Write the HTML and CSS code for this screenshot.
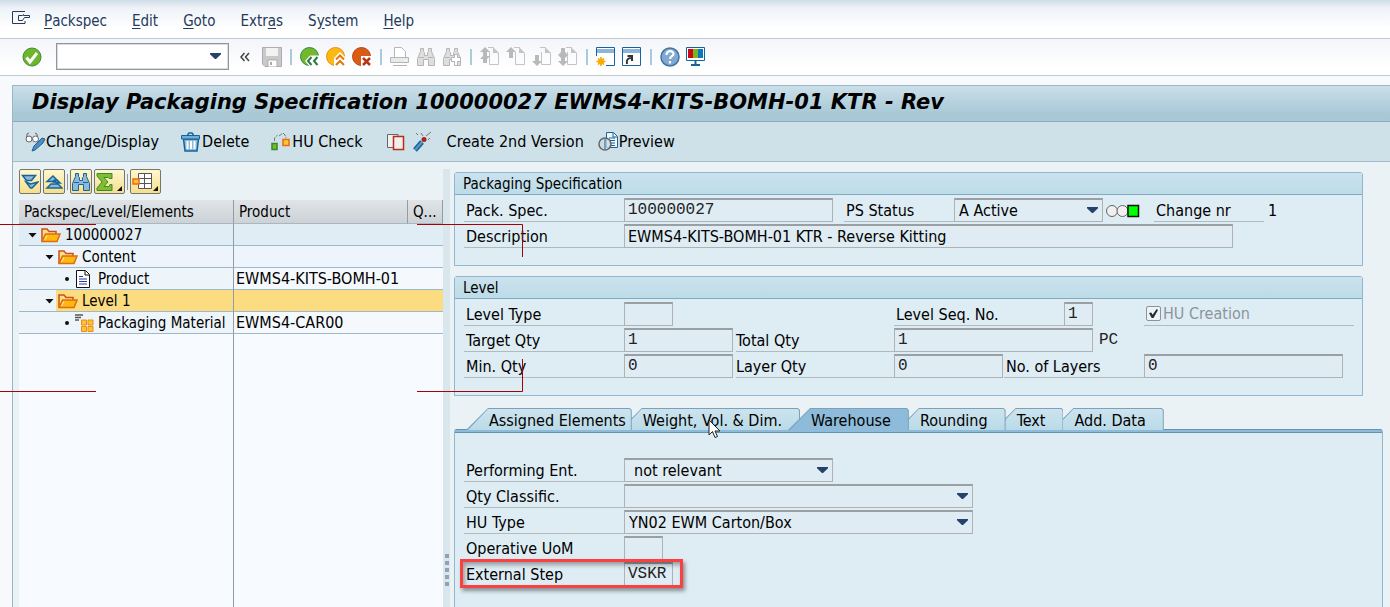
FILE: index.html
```html
<!DOCTYPE html>
<html lang="en">
<head>
<meta charset="utf-8">
<title>Display Packaging Specification</title>
<link rel="stylesheet" href="styles.css">
</head>
<body>
<svg class="defs" aria-hidden="true">
  <symbol id="page" viewBox="0 0 19 19"><path d="M8 .5h5.500M9.500 5v12.500h9V6M9.500 .5h4" fill="none" stroke="#c4c4c4"/><path d="M13 0v6h6z" fill="#c4c4c4"/></symbol>
  <symbol id="binoc" viewBox="0 0 20 20"><path d="M4.500 1.500h3v3l1 1v3h3v-3l1-1v-3h3v3l3 7v7h-6v-6h-5v6h-6v-7l3-7z"/><path d="M3 10.500h5M12 10.500h5" /></symbol>
  <symbol id="folder" viewBox="0 0 20 16"><path d="M1 14.500V2h5l2 2.500h7V7" fill="#ffe08a" stroke="#c9501c" stroke-width="1.500"/><path d="M1 14.500L4.500 7H19l-3 7.500z" fill="#fdb913" stroke="#e06b10" stroke-width="1.500"/><path d="M3.500 13L6 8.500" stroke="#fff0a0"/></symbol>
</svg>

<nav class="menubar">
  <button class="sysmenu" aria-label="Window menu"><svg width="19" height="14" viewBox="0 0 19 14" fill="none" stroke="#24395c"><path d="M13 .5H.5v12h12.500V10M6.500 9.500v-5h4l1-1v1h6v2h-5l-2 3z"/></svg></button>
  <button><u>P</u>ackspec</button><button><u>E</u>dit</button><button><u>G</u>oto</button><button>Extr<u>a</u>s</button><button>S<u>y</u>stem</button><button><u>H</u>elp</button>
</nav>

<div class="toolbar">
  <button class="enter" aria-label="Enter"><svg width="20" height="20" viewBox="0 0 20 20"><circle cx="10" cy="10" r="9" fill="#6db52b" stroke="#3d8b37"/><path d="M4.500 10.500l3.500 4.500L15 6" fill="none" stroke="#fff" stroke-width="3"/></svg></button>
  <span class="combo command"><input aria-label="Command"></span>
  <button class="collapse" aria-label="Hide command field"><svg width="10" height="10" viewBox="0 0 10 10" fill="none" stroke="#444" stroke-width="1.500"><path d="M4.500 1L1 5l3.500 4M9 1L5.500 5 9 9"/></svg></button>
  <button aria-label="Save"><svg width="20" height="20" viewBox="0 0 20 20"><path d="M.5 .5h19v19H3l-2.500-2.500z" fill="#c9c9c9" stroke="#adadad"/><path d="M4 1h12v8H4z" fill="#f3f3f3"/><path d="M6 13h9v7H6z" fill="#fff" stroke="#adadad"/><path d="M8 15h2v3H8z" fill="#aaa"/></svg></button>
  <i class="sep"></i>
  <button aria-label="Back"><svg width="20" height="20" viewBox="0 0 20 20"><circle cx="9.500" cy="9.500" r="9" fill="#73b72b" stroke="#2c8a4b"/><path d="M5 14l5-5.500h10V20H10z" fill="#fff"/><path d="M11.500 10L8 14l3.500 4M17.500 10L14 14l3.500 4" fill="none" stroke="#287b43" stroke-width="2"/></svg></button>
  <button aria-label="Exit"><svg width="20" height="20" viewBox="0 0 20 20"><circle cx="9.500" cy="9.500" r="9" fill="#fdb913" stroke="#ee8b18"/><path d="M14 5l6 6v9H8v-9z" fill="#fff"/><path d="M10 12.500L14 8.500l4 4M10 18l4-4 4 4" fill="none" stroke="#e4760d" stroke-width="2"/></svg></button>
  <button aria-label="Cancel"><svg width="20" height="20" viewBox="0 0 20 20"><circle cx="9.500" cy="9.500" r="9" fill="#d95b16" stroke="#bb4212"/><path d="M9 9h11v11H9z" fill="#fff"/><path d="M11 11l7 7M18 11l-7 7" stroke="#b93515" stroke-width="2.500"/></svg></button>
  <i class="sep"></i>
  <button aria-label="Print"><svg width="20" height="20" viewBox="0 0 20 20" fill="#e9e9e9" stroke="#b5b5b5"><path d="M4.500 11V.5h7l4 4V11" fill="#fff"/><path d="M.5 10.500h18v5H.5zM3 18.500h14"/><path d="M14 13.500h3" stroke="#fff"/></svg></button>
  <button aria-label="Find"><svg class="gray" width="20" height="20"><use href="#binoc"/></svg></button>
  <button aria-label="Find next"><svg class="gray" width="20" height="20" viewBox="0 0 20 20"><use href="#binoc"/><path d="M12.500 7.500h3v3h3v4h-3v4h-3v-4h-3v-4h3z" fill="#fff"/></svg></button>
  <i class="sep"></i>
  <button aria-label="First page"><svg width="20" height="20" viewBox="0 0 20 20"><use href="#page" width="19" height="19"/><path d="M5 0l5 5H7v4h3l-3 3v4H3v-4L0 12l3-3V5H0z" fill="#b9b9b9"/></svg></button>
  <button aria-label="Previous page"><svg width="20" height="20" viewBox="0 0 20 20"><use href="#page" width="19" height="19"/><path d="M5 0l5 5H7v6H3V5H0z" fill="#b9b9b9"/></svg></button>
  <button aria-label="Next page"><svg width="20" height="20" viewBox="0 0 20 20"><use href="#page" width="19" height="19"/><path d="M5 19l5-5H7V8H3v6H0z" fill="#b9b9b9"/></svg></button>
  <button aria-label="Last page"><svg width="20" height="20" viewBox="0 0 20 20"><use href="#page" width="19" height="19"/><path d="M5 19l5-5H7v-3l3-3-3-3V1H3v4L0 8l3 3v3H0z" fill="#b9b9b9"/></svg></button>
  <i class="sep"></i>
  <button aria-label="New session"><svg width="20" height="20" viewBox="0 0 20 20"><path d="M.5 .5h18v18H.5z" fill="#fff" stroke="#17649b"/><path d="M1 2h17v4H1z" fill="#8db4da"/><path d="M0 9h10v11H0z" fill="#fff"/><path d="M5 10v9M.5 14.500h9M2 11.500l6 6M8 11.500l-6 6" stroke="#f5a100" stroke-width="1.500"/><circle cx="5" cy="14.500" r="3" fill="#f9ad00"/></svg></button>
  <button aria-label="Create shortcut"><svg width="20" height="20" viewBox="0 0 20 20"><path d="M.5 .5h18v18H.5z" fill="#fff" stroke="#17649b"/><path d="M1 2h17v4H1z" fill="#8db4da"/><path d="M5 17c-1-4 1-6 4-6M5.500 9H10v5" fill="none" stroke="#333" stroke-width="2"/></svg></button>
  <i class="sep"></i>
  <button aria-label="Help"><svg width="20" height="20" viewBox="0 0 20 20"><circle cx="10" cy="10" r="9" fill="#7fa9d3" stroke="#45739e" stroke-width="1.500"/><path d="M6.500 8c0-5 7-5 7-1 0 2-3.500 2.500-3.500 5M10 14v2.500" fill="none" stroke="#fff" stroke-width="2.200"/></svg></button>
  <button aria-label="Customize layout"><svg width="20" height="20" viewBox="0 0 20 20"><path d="M.5 .5h18v13H.5z" fill="#fff" stroke="#17649b"/><path d="M2 2h5v9H2z" fill="#cc0614"/><path d="M7 2h5v9H7z" fill="#7ab51d"/><path d="M12 2h5v9h-5z" fill="#0879c0"/><path d="M9.500 14v4M5 18h9" stroke="#17649b" stroke-width="2"/></svg></button>
</div>

<main class="window">
  <h1>Display Packaging Specification 100000027 EWMS4-KITS-BOMH-01 KTR - Rev</h1>
  <div class="appbar">
    <button class="change"><svg width="21" height="20" viewBox="0 0 21 20" fill="none"><path d="M1.500 6L2 2l2-1M12.500 6L12 2l-2-1" stroke="#666"/><circle cx="4" cy="7" r="3" fill="#fff" stroke="#666"/><circle cx="10.500" cy="7" r="3" fill="#fff" stroke="#666"/><path d="M7 19l2-5 8-8 3 1-2 4-8 7z" fill="#4f8dbc" stroke="#17649b"/></svg>Change/Display</button>
    <button class="delete"><svg width="21" height="20" viewBox="0 0 21 20"><path d="M2.500 7h15l-1.500 12h-12z" fill="#8db9da" stroke="#17649b" stroke-width="1.500"/><path d="M.5 3.500h18V7H.5z" fill="#77abd0" stroke="#17649b"/><path d="M6.500 3l1.500-2h3l1.500 2" fill="none" stroke="#17649b" stroke-width="1.500"/><path d="M6.500 9v8M10 9v8M13.500 9v8" stroke="#fff" stroke-width="2"/></svg>Delete</button>
    <button class="hu"><svg width="21" height="20" viewBox="0 0 21 20"><path d="M3.500 9V6l3-3M8 4l4-3 2 2 1 3" fill="none" stroke="#777" stroke-dasharray="4 1"/><path d="M1 11.500h5v6H1z" fill="#79bb2d" stroke="#36882d" stroke-width="1.500"/><path d="M12 7.500h6v6h-6z" fill="#ffc734" stroke="#e56c15" stroke-width="1.500"/></svg>HU Check</button>
    <button class="copy" aria-label="Copy"><svg width="18" height="18" viewBox="0 0 18 18"><path d="M6 14.500H.5V1.500H11V3" fill="#f0f0f0" stroke="#666"/><path d="M6.500 3.500h10v13h-10z" fill="#f2eeee" stroke="#b62e18" stroke-width="1.500"/></svg></button>
    <button class="wand" aria-label="Generate"><svg width="19" height="20" viewBox="0 0 19 20"><path d="M2 18l7-8" stroke="#17649b" stroke-width="5"/><path d="M2 18l7-8" stroke="#5997c7" stroke-width="2"/><circle cx="11" cy="7.500" r="2.500" fill="#a52620"/><path d="M3 1l2 2M8 1l2 3M13 4l5-4M15 8l2-2" stroke="#777"/></svg></button>
    <button class="version">Create 2nd Version</button>
    <button><svg width="21" height="20" viewBox="0 0 21 20"><path d="M8.500 .5h7l4 4v11h-11z" fill="#eef5fb" stroke="#17649b"/><path d="M15 1v4h4M11 6h6M11 8.500h6M11 11h6M11 13.500h6" fill="none" stroke="#17649b"/><circle cx="7" cy="12" r="6" fill="#cbd9e0" fill-opacity=".8" stroke="#666" stroke-width="1.500"/><path d="M7 7v10" stroke="#17649b"/></svg>Preview</button>
  </div>

  <div class="work">
    <section class="treepane">
      <div class="treetools">
        <button aria-label="Expand"><svg width="18" height="16" viewBox="0 0 18 16" fill="#8db9dc" stroke="#17649b" stroke-width="1.500"><path d="M1.500 1.500h13l-4 5h-5zM5 8l4.500 2L17 8l-6 6H9.500z"/></svg></button>
        <button aria-label="Collapse"><svg width="18" height="16" viewBox="0 0 18 16" fill="#8db9dc" stroke="#17649b" stroke-width="1.500"><path d="M2 7.500l6-5.500 3.500 3.500-4 2zM2 14l4-4h7l4 4zM9 8l3-2 3 3z"/></svg></button>
        <i class="sep"></i>
        <button aria-label="Find"><svg class="blue" width="20" height="20"><use href="#binoc"/></svg></button>
        <button class="wide" aria-label="Total"><svg width="28" height="20" viewBox="0 0 28 20"><path d="M1 1.500h15v5h-3l-1-1H8l4 4.500-4 4.500h5l1-2h2v6H1V16l5-6-5-6z" fill="#83bb32" stroke="#368b35"/><path d="M26 14v5h-5z" fill="#111"/></svg></button>
        <i class="sep"></i>
        <button class="wide" aria-label="Layout"><svg width="28" height="20" viewBox="0 0 28 20"><path d="M6.500 1.500h13v15h-13zM12.500 2v15M6 6.500h14M6 11.500h14" fill="#fff" stroke="#555"/><path d="M1 7h6v5H1z" fill="#ffc334" stroke="#e56c15" stroke-width="1.500"/><path d="M26 14v5h-5z" fill="#111"/></svg></button>
      </div>
      <table class="tree">
        <colgroup><col class="c1"><col class="c2"><col class="c3"></colgroup>
        <thead><tr><th>Packspec/Level/Elements</th><th>Product</th><th>Q...</th></tr></thead>
        <tbody>
          <tr class="root"><td><div class="node d1"><i class="open"></i><svg width="20" height="16"><use href="#folder"/></svg>100000027</div></td><td></td><td></td></tr>
          <tr><td><div class="node d2"><i class="open"></i><svg width="20" height="16"><use href="#folder"/></svg>Content</div></td><td></td><td></td></tr>
          <tr class="leaf"><td><div class="node d3"><i class="dot"></i><svg width="20" height="18" viewBox="0 0 20 18"><path d="M2.500 .5h9l4 4v13h-13z" fill="#fff" stroke="#111"/><path d="M11 1v4h4" fill="none" stroke="#111"/><path d="M5 6.500h4M5 9h8M5 11.500h8M5 14h8" stroke="#2535a5"/></svg>Product</div></td><td>EWMS4-KITS-BOMH-01</td><td></td></tr>
          <tr class="selected"><td><div class="node d2"><i class="open"></i><svg width="20" height="16"><use href="#folder"/></svg>Level 1</div></td><td></td><td></td></tr>
          <tr class="leaf"><td><div class="node d3"><i class="dot"></i><svg width="20" height="18" viewBox="0 0 20 18"><path d="M1 1h8M1 3.500h6M1 6h4" stroke="#555" stroke-width="1.500"/><path d="M7.500 6h5v5h-5zM14 6h5v5h-5zM7.500 12.500h5v5h-5zM14 12.500h5v5h-5z" fill="#ffc334" stroke="#ef8b13"/></svg>Packaging Material</div></td><td>EWMS4-CAR00</td><td></td></tr>
        </tbody>
      </table>
      <div class="treefill"></div>
    </section>
    <div class="splitter"><i></i><i></i><i></i><i></i><i></i></div>

    <section class="detail">
      <fieldset class="group">
        <legend>Packaging Specification</legend>
        <div class="row">
          <label class="w160" for="ps">Pack. Spec.</label><input class="mono w209" id="ps" value="100000027" readonly>
          <label class="w110 gap12" for="st">PS Status</label><span class="combo w148"><select id="st"><option>A Active</option></select></span>
          <svg class="lights" width="34" height="14" viewBox="0 0 34 14"><circle cx="6" cy="7" r="5.500" fill="#f0f0f0" stroke="#666"/><circle cx="16.500" cy="7" r="5.500" fill="#f0f0f0" stroke="#666"/><path d="M22 1.500h10.500v11H22z" fill="#0f0" stroke="#111" stroke-width="1.500"/></svg>
          <span class="label w110 gap14">Change nr</span><output>1</output>
        </div>
        <div class="row"><label class="w160" for="de">Description</label><input class="w609" id="de" value="EWMS4-KITS-BOMH-01 KTR - Reverse Kitting" readonly></div>
      </fieldset>

      <fieldset class="group">
        <legend>Level</legend>
        <div class="row grid"><label for="lt">Level Type</label><input class="mono w49" id="lt" readonly><div class="seq"><label for="ls">Level Seq. No.</label><input class="mono w29" id="ls" value="1" readonly></div><label class="check"><input type="checkbox" checked disabled>HU Creation</label></div>
        <div class="row grid"><label for="tq">Target Qty</label><input class="mono w109" id="tq" value="1" readonly><label class="c3" for="to">Total Qty</label><div class="total"><input class="mono w199" id="to" value="1" readonly><span class="unit">PC</span></div></div>
        <div class="row grid"><label for="mq">Min. Qty</label><input class="mono w109" id="mq" value="0" readonly><label class="c3" for="lq">Layer Qty</label><input class="mono w109" id="lq" value="0" readonly><label for="nl">No. of Layers</label><input class="mono w199" id="nl" value="0" readonly></div>
      </fieldset>

      <div class="tabs" role="tablist">
        <button class="tab first" role="tab">Assigned Elements</button><button class="tab second" role="tab">Weight, Vol. &amp; Dim.</button><button class="tab active" role="tab" aria-selected="true">Warehouse</button><button class="tab third" role="tab">Rounding</button><button class="tab fourth" role="tab">Text</button><button class="tab fifth" role="tab">Add. Data</button>
      </div>
      <div class="tabpanel" role="tabpanel">
        <div class="row"><label class="w160" for="pe">Performing Ent.</label><span class="combo inset w209"><select id="pe"><option>not relevant</option></select></span></div>
        <div class="row"><label class="w160" for="qc">Qty Classific.</label><span class="combo w349"><select id="qc"><option></option></select></span></div>
        <div class="row"><label class="w160" for="hu">HU Type</label><span class="combo w349"><select id="hu"><option>YN02 EWM Carton/Box</option></select></span></div>
        <div class="row"><label class="w160" for="uo">Operative UoM</label><input class="mono w39" id="uo" readonly></div>
        <div class="row marked"><label class="w160" for="ex">External Step</label><input class="mono w49" id="ex" value="VSKR" readonly></div>
      </div>
    </section>
  </div>
</main>

<svg class="overlay" width="530" height="400" fill="none" stroke="#a80008" aria-hidden="true"><path d="M0 224.500h96M417 224.500h105.500V257M0 391.500h96M417 391.500h105.500V359"/></svg>
<svg class="pointer" width="13" height="20" viewBox="0 0 13 20" aria-hidden="true"><path d="M1 1v15l3.500-3.500 2.500 6 2.500-1L7 12h5z" fill="#fff" stroke="#222"/></svg>
</body>
</html>
```
FILE: styles.css
```css
*, *::before, *::after { box-sizing: border-box; }
body {
  margin: 0; min-height: 100vh; display: flex; flex-direction: column; position: relative;
  font: 16px/20px "DejaVu Sans Condensed", Tahoma, sans-serif; color: #000;
  background: #f7f9fc; overflow-x: hidden;
}
.defs { position: absolute; width: 0; height: 0; }
button { font: inherit; color: inherit; background: none; border: 0; padding: 0; display: flex; align-items: center; white-space: nowrap; }
svg { display: block; flex: none; }
input, select { font: inherit; color: inherit; margin: 0; border-radius: 0; min-width: 0; }

.menubar { display: flex; align-items: center; gap: 25px; height: 39px; padding: 3px 12px 0; font-size: 15px; color: #24395c; background: linear-gradient(#cfdde7, #eef2f8 8px, #fff 28px); border-bottom: 1px solid #bcc9d3; }
.menubar u { text-underline-offset: 2px; }
.sysmenu { margin-right: -12px; align-self: flex-start; padding-top: 8px; }

.toolbar { display: flex; align-items: center; gap: 6px; height: 37px; padding: 0 22px 1px; background: linear-gradient(#f3f5fa, #fff 30px); border-bottom: 1px solid #c3cbd3; }
.sep { width: 2px; height: 16px; margin: 0 2px; background: #a9cbdc; }
.toolbar .enter { margin-right: 8px; }
.collapse { margin: 0 6px 0 5px; }
.gray { fill: #dedede; stroke: #b5b5b5; }
.blue { fill: #8db9dc; stroke: #17649b; }

.combo { position: relative; display: flex; }
.combo::after { content: ""; position: absolute; right: 5px; top: 9px; width: 11px; height: 6px; background: #24426b; clip-path: polygon(0 0, 100% 0, 100% 20%, 55% 100%, 45% 100%, 0 20%); pointer-events: none; }
.combo select { width: 100%; appearance: none; padding: 0 20px 0 4px; }
.combo.inset select { padding-left: 9px; }
.command { width: 173px; }
.command input { width: 100%; height: 27px; border: 1px solid #8f969c; background: #fff; box-shadow: inset 0 0 0 1px #d9dde0; }
.command::after { top: 10px; right: 8px; }

.window { flex: 1; display: flex; flex-direction: column; margin: 9px 0 0 12px; border: 1px solid #9ab6c5; border-width: 1px 0 0 1px; background: #eaf2f6; }
h1 { margin: 0; height: 36px; padding: 0 19px; font: italic bold 21px/33px "DejaVu Sans", Verdana, sans-serif; white-space: nowrap; background: linear-gradient(#cadfe9, #a8c8d6 28px); border-bottom: 1px solid #8eabba; }
.appbar { display: flex; align-items: center; height: 40px; padding: 0 12px; background: #cee1e9; border-bottom: 1px solid #a3bccb; }
.change, .delete { margin-right: 22px; }
.hu { margin-right: 24px; }
.copy { margin-right: 8px; }
.wand { margin-right: 15px; }
.version { margin-right: 14px; }

.work { flex: 1; display: flex; }
.treepane { width: 430px; padding: 6px 0 0 6px; display: flex; flex-direction: column; flex: none; font-size: 15px; }
.treetools { display: flex; align-items: center; gap: 2px; height: 27px; }
.treetools button { width: 22px; height: 25px; justify-content: center; border: 1px solid #77766a; border-radius: 2px; background: linear-gradient(#fff7cf, #f5df8c); }
.treetools .wide { width: 31px; }
.treetools .sep { margin: 0; width: 1px; background: #999; }
.tree { width: 100%; margin-top: 5px; table-layout: fixed; border-collapse: separate; border-spacing: 0; }
.c1 { width: 215px; }
.c2 { width: 174px; }
.tree th { height: 24px; padding: 1px 5px 0; font-weight: 400; text-align: left; white-space: nowrap; overflow: hidden; background: linear-gradient(#e0e4e7, #ccd2d6); border-right: 1px solid #929ca5; border-bottom: 1px solid #aab7c2; }
.tree td { height: 22px; padding: 1px 2px 0; font-size: 16px; line-height: 20px; white-space: nowrap; background: #f5f9fd; border-bottom: 1px solid #9db8cb; }
.tree td:first-child { padding: 1px 0 0; font-size: 15px; background: #edf5fb; border-right: 1px solid #929ca5; }
.tree tr.root td { background: #e1edf5; }
.tree tr:nth-child(2) td { background: #edf4fb; }
.tree tr.selected td { background: #fcdc80; }
.tree tr.selected td:first-child { background: linear-gradient(90deg, #edf5fb 37px, #fcdc80 37px); }
.node { display: flex; align-items: center; gap: 4px; }
.d1 { padding-left: 9px; }
.d2 { padding-left: 26px; }
.d3 { padding-left: 45px; }
.open { width: 9px; height: 5px; background: #111; clip-path: polygon(0 0, 100% 0, 50% 100%); }
.dot { width: 4px; height: 4px; margin: 0 1px; border-radius: 50%; background: #111; }
.treefill { flex: 1; width: 215px; border-right: 1px solid #929ca5; background: #f7faff; box-shadow: 209px 0 #f7faff; }
.splitter { width: 7px; margin-top: 7px; padding-bottom: 21px; flex: none; display: flex; flex-direction: column; justify-content: flex-end; align-items: center; gap: 3px; background: #d9e6eb; }
.splitter i { width: 4px; height: 4px; background: #8ea4b5; }

.detail { flex: 1; min-width: 0; padding: 10px 7px 0 4px; display: flex; flex-direction: column; }
.group { margin: 0 20px 10px 0; min-width: 0; padding: 0 0 17px 9px; border: 1px solid #8fb7cd; border-radius: 3px 3px 0 0; background: #deecf4; }
.group legend { float: left; width: calc(100% + 9px); height: 22px; margin: 0 0 3px -9px; padding: 0 8px; font-size: 15px; line-height: 22px; background: linear-gradient(#cbe2ed, #bcdce8); border-bottom: 1px solid #82a9c3; }
.row { clear: both; display: flex; height: 24px; margin-bottom: 2px; }
.row:last-child { margin-bottom: 0; }
.row label, .row .label { flex: none; height: 24px; padding-left: 2px; line-height: 25px; white-space: nowrap; border-bottom: 1px solid #b4b9bd; }
.row .combo, .row > input, .seq input, .total input { flex: none; height: 24px; }
.row select, .row input:not([type=checkbox]) { height: 24px; border: 1px solid #aeb2b4; border-top: 2px solid #999fa2; background: #dfecf3; opacity: 1; }
.row input:not([type=checkbox]) { padding: 0 3px; }
.row input.mono, .unit { font-family: "Liberation Mono", monospace; color: #222; }
.row input.mono { padding-bottom: 2px; }
.grid { display: grid; grid-template-columns: 160px 112px 158px 110px 140px 210px; }
.seq { grid-column: 4 / 6; display: flex; }
.seq label { width: 170px; }
.total { grid-column: 4 / 6; display: flex; }
.unit { padding-left: 6px; line-height: 24px; }
.row label.c3 { width: 158px; padding-left: 0; }
.row label.check { display: flex; align-items: center; gap: 2px; color: #8b949c; }
.check input { appearance: none; width: 15px; height: 15px; border: 1px solid #8b949c; border-radius: 2px; background: #edf3f6; display: grid; place-items: center; }
.check input::after { content: ""; width: 9px; height: 9px; background: #222d3a; clip-path: polygon(0 45%, 25% 40%, 40% 65%, 85% 0, 100% 10%, 50% 100%, 30% 100%); }
.lights { margin: 6px 0 0 3px; }
.row output { padding-left: 4px; line-height: 25px; }
.gap12 { margin-left: 11px; }
.gap14 { margin-left: 14px; }
.w29 { width: 29px; } .w39 { width: 39px; } .w49 { width: 49px; } .w109 { width: 109px; } .w110 { width: 110px; }
.w148 { width: 149px; } .w160 { width: 160px; } .w199 { width: 199px; } .w209 { width: 209px; } .w349 { width: 349px; } .w609 { width: 609px; }

.tabs { display: flex; padding-left: 12px; margin-top: 2px; height: 21px; isolation: isolate; }
.tab { position: relative; height: 22px; padding: 3px 18px 0 23px; margin-right: -12px; }
.tab::before, .tab::after { content: ""; position: absolute; inset: 0; z-index: -1; clip-path: polygon(22px 0, calc(100% - 2px) 0, 100% 2px, 100% 100%, 0 100%); background: #7aa3bb; }
.tab::after { clip-path: polygon(22px 1px, calc(100% - 2px) 1px, calc(100% - 1px) 3px, calc(100% - 1px) 100%, 2px 100%); background: linear-gradient(#cde4ee, #badae8); }
.first { z-index: 5; padding-right: 6px; }
.second { z-index: 4; }
.active { z-index: 6; }
.active::after { background: #8dbbd9; }
.third { z-index: 3; }
.fourth { z-index: 2; }
.fifth { z-index: 1; }
.tabpanel { flex: 1; padding: 28px 0 16px 9px; border: 1px solid #8fb7cd; border-bottom: 0; border-top: 1px solid #6594b2; border-radius: 3px 3px 0 0; background: linear-gradient(#8dbbd9 2px, #6594b2 2px, #6594b2 3px, #deecf4 3px); }
.marked { position: relative; }
.marked::after { content: ""; position: absolute; left: -4px; top: -3px; width: 223px; height: 29px; border: 3px solid #fa4141; box-shadow: 2px 3px 4px #0006, inset 2px 3px 4px #0005; pointer-events: none; }

.overlay { position: absolute; left: 0; top: 0; z-index: 9; pointer-events: none; }
.pointer { position: absolute; left: 708px; top: 419px; z-index: 10; pointer-events: none; }
```
